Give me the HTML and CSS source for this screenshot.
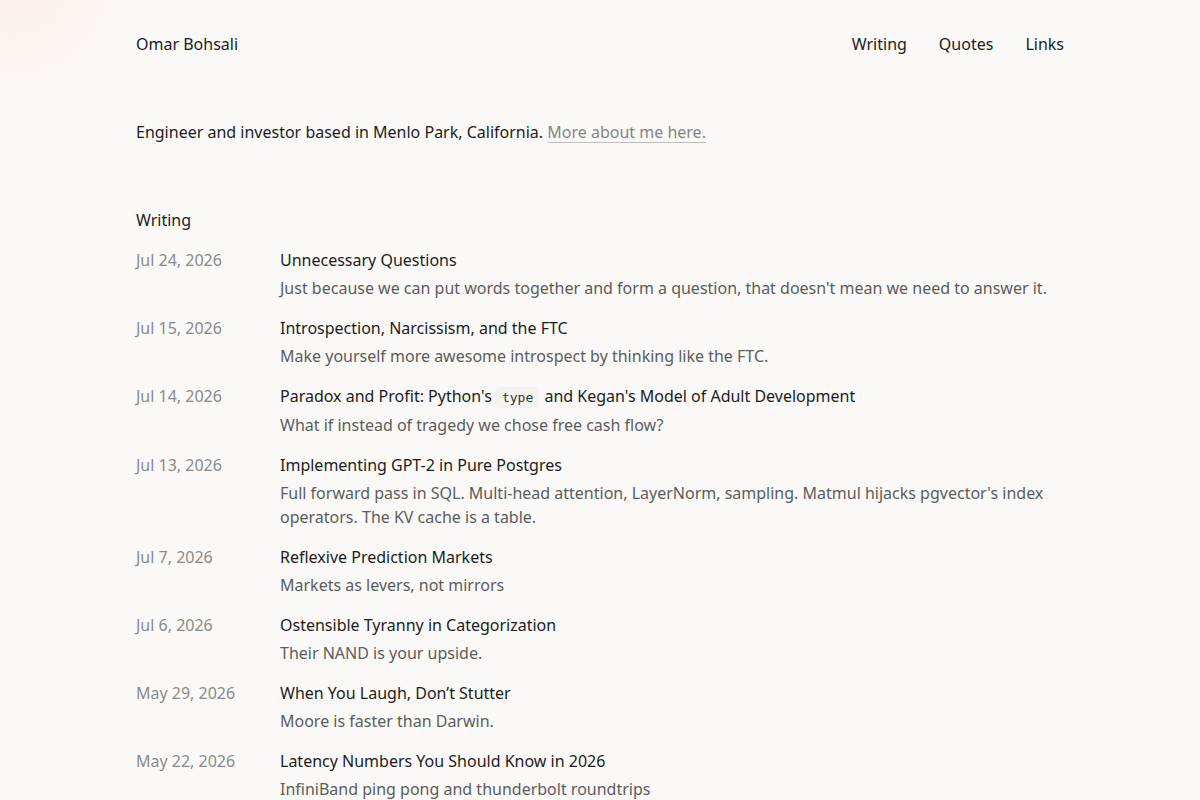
FILE: index.html
```html
<!DOCTYPE html>
<html lang="en">
<head>
<meta charset="utf-8">
<title>Omar Bohsali</title>
<link rel="stylesheet" href="styles.css">
</head>
<body>
<div class="glow"></div>
<div class="page">
  <header class="site-header">
    <a class="brand" href="#">Omar Bohsali</a>
    <nav class="nav">
      <a href="#">Writing</a>
      <a href="#">Quotes</a>
      <a href="#">Links</a>
    </nav>
  </header>

  <p class="intro">Engineer and investor based in Menlo Park, California. <a class="more" href="#">More about me here.</a></p>

  <section class="writing">
    <h2 class="section-title">Writing</h2>
    <ul class="posts">
      <li class="post">
        <span class="date">Jul 24, 2026</span>
        <div class="body">
          <a class="title" href="#">Unnecessary Questions</a>
          <p class="desc">Just because we can put words together and form a question, that doesn't mean we need to answer it.</p>
        </div>
      </li>
      <li class="post">
        <span class="date">Jul 15, 2026</span>
        <div class="body">
          <a class="title" href="#">Introspection, Narcissism, and the FTC</a>
          <p class="desc">Make yourself more awesome introspect by thinking like the FTC.</p>
        </div>
      </li>
      <li class="post">
        <span class="date">Jul 14, 2026</span>
        <div class="body">
          <a class="title" href="#">Paradox and Profit: Python's <code>type</code> and Kegan's Model of Adult Development</a>
          <p class="desc">What if instead of tragedy we chose free cash flow?</p>
        </div>
      </li>
      <li class="post">
        <span class="date">Jul 13, 2026</span>
        <div class="body">
          <a class="title" href="#">Implementing GPT-2 in Pure Postgres</a>
          <p class="desc">Full forward pass in SQL. Multi-head attention, LayerNorm, sampling. Matmul hijacks pgvector's index operators. The KV cache is a table.</p>
        </div>
      </li>
      <li class="post">
        <span class="date">Jul 7, 2026</span>
        <div class="body">
          <a class="title" href="#">Reflexive Prediction Markets</a>
          <p class="desc">Markets as levers, not mirrors</p>
        </div>
      </li>
      <li class="post">
        <span class="date">Jul 6, 2026</span>
        <div class="body">
          <a class="title" href="#">Ostensible Tyranny in Categorization</a>
          <p class="desc">Their NAND is your upside.</p>
        </div>
      </li>
      <li class="post">
        <span class="date">May 29, 2026</span>
        <div class="body">
          <a class="title" href="#">When You Laugh, Don’t Stutter</a>
          <p class="desc">Moore is faster than Darwin.</p>
        </div>
      </li>
      <li class="post">
        <span class="date">May 22, 2026</span>
        <div class="body">
          <a class="title" href="#">Latency Numbers You Should Know in 2026</a>
          <p class="desc">InfiniBand ping pong and thunderbolt roundtrips</p>
        </div>
      </li>
    </ul>
  </section>
</div>
</body>
</html>
```
FILE: styles.css
```css
html, body {
  margin: 0;
  padding: 0;
}
body {
  background: #faf9f7;
  color: #1c1c1c;
  font-family: "Noto Sans", "Open Sans", sans-serif;
  font-size: 16px;
  line-height: 24px;
  position: relative;
  min-height: 800px;
}
.glow {
  position: absolute;
  top: -120px;
  left: -120px;
  width: 260px;
  height: 220px;
  background: radial-gradient(closest-side, rgba(250, 225, 220, 0.45), rgba(250, 249, 247, 0));
  pointer-events: none;
}
.page {
  position: relative;
  width: 928px;
  margin: 0 auto;
  padding-top: 32px;
}
a {
  color: inherit;
  text-decoration: none;
}
.site-header {
  display: flex;
  justify-content: space-between;
  align-items: center;
}
.nav {
  display: flex;
  gap: 32px;
}
.intro {
  margin: 64px 0 0;
}
.more {
  color: #858585;
  text-decoration: underline;
  text-decoration-color: #bdbdbd;
  text-underline-offset: 4px;
  text-decoration-thickness: 1px;
}
.section-title {
  margin: 64px 0 0;
  font-size: 16px;
  font-weight: 400;
  line-height: 24px;
}
.posts {
  list-style: none;
  margin: 16px 0 0;
  padding: 0;
  display: flex;
  flex-direction: column;
  gap: 16px;
}
.post {
  display: flex;
}
.date {
  flex: 0 0 144px;
  color: #8a8a8a;
}
.body {
  flex: 1;
  min-width: 0;
}
.title {
  display: block;
  color: #1c1c1c;
}
.desc {
  margin: 4px 0 0;
  color: #5c5c5c;
}
code {
  font-family: "DejaVu Sans Mono", "Liberation Mono", monospace;
  font-size: 13px;
  line-height: 22px;
  background: #f4f2ef;
  color: #333;
  padding: 3px 6px;
  border-radius: 4px;
  margin: 0 1px 0 0;
}
```
